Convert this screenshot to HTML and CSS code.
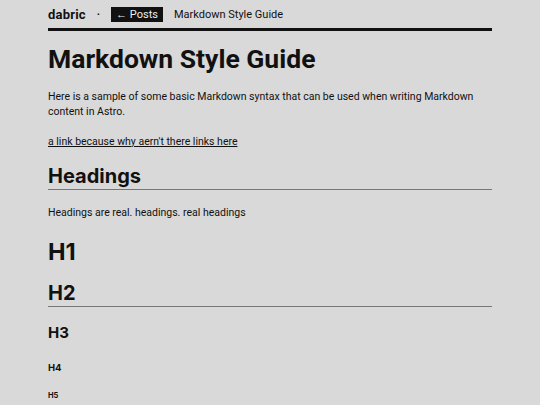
FILE: index.html
```html
<!DOCTYPE html>
<html lang="en">
<head>
    <meta charset="UTF-8">
    <meta name="viewport" content="width=device-width, initial-scale=1.0">
    <title>Markdown Style Guide</title>
    <link rel="stylesheet" href="styles.css">
</head>
<body>
    <div class="page">
        <!-- Top Navigation -->
        <nav class="nav">
            <span class="brand">dabric</span>
            <span class="sep">·</span>
            <a class="back" href="#">← Posts</a>
            <span class="crumb">Markdown Style Guide</span>
        </nav>

        <!-- Article -->
        <article class="post">
            <h1 class="title">Markdown Style Guide</h1>
            <p>Here is a sample of some basic Markdown syntax that can be used when writing Markdown content in Astro.</p>
            <p><a href="#">a link because why aern't there links here</a></p>

            <h2>Headings</h2>
            <p>Headings are real. headings. real headings</p>

            <h1>H1</h1>
            <h2>H2</h2>
            <h3>H3</h3>
            <h4>H4</h4>
            <h5>H5</h5>
        </article>
    </div>
</body>
</html>
```

FILE: styles.css
```css
/* Page */
body {
    margin: 0;
    background: #d9d9d9;
    color: #111111;
    font-family: "Roboto", "Liberation Sans", sans-serif;
}

.page {
    width: 444px;
    margin: 0 auto;
}

/* Navigation */
.nav {
    display: flex;
    align-items: center;
    height: 28px;
    border-bottom: 3px solid #111111;
    font-size: 11px;
}

.brand {
    font-weight: 700;
    font-size: 13px;
    letter-spacing: 0.2px;
}

.sep {
    font-weight: 700;
    margin: 0 11px;
}

.back {
    background: #111111;
    color: #eeeeee;
    text-decoration: none;
    padding: 1px 5px;
}

.crumb {
    margin-left: 11px;
}

/* Article */
.post {
    font-size: 10.5px;
    line-height: 15px;
}

.post p {
    margin: 0 0 15px;
}

.post a {
    color: #111111;
}

.post h1,
.post h2,
.post h3,
.post h4,
.post h5 {
    font-family: "Inter", "Liberation Sans", sans-serif;
    font-weight: 700;
    margin: 0;
    line-height: 1.2;
}

.post .title {
    font-family: "Roboto", "Liberation Sans", sans-serif;
    font-size: 26.5px;
    margin: 12px 0 14px;
}

.post h1 {
    font-size: 23.5px;
    margin: 18px 0 15px;
}

.post h2 {
    font-size: 20px;
    border-bottom: 1px solid #777777;
    padding-bottom: 1px;
    margin: 4px 0 15px;
}

.post h3 {
    font-size: 15px;
    margin: 17px 0 20px;
}

.post h4 {
    font-size: 9.5px;
    margin: 0 0 18px;
}

.post h5 {
    font-size: 7.5px;
}
```
